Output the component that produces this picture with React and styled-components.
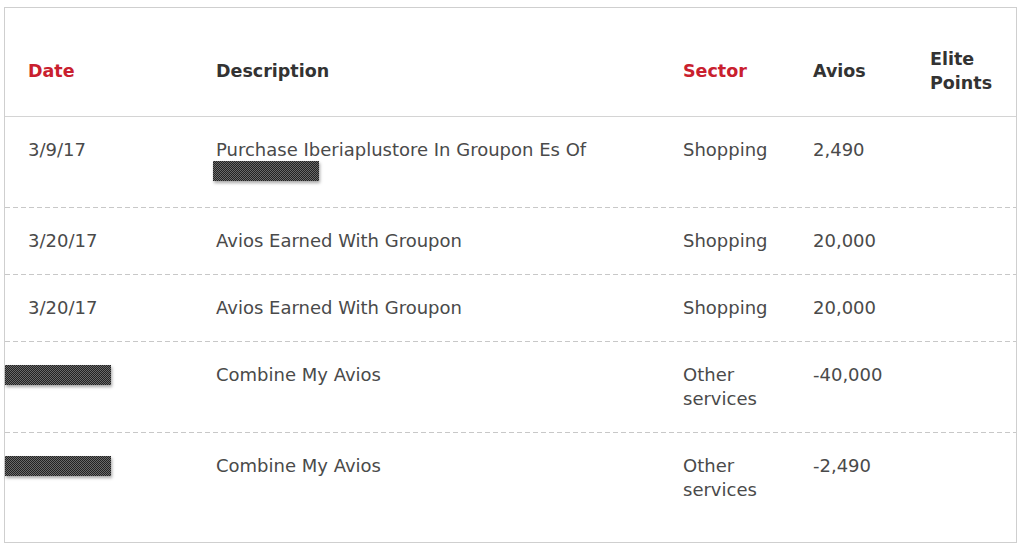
import React from 'react';
import styled, { createGlobalStyle } from 'styled-components';

const rows = [
  { date: '3/9/17', desc: 'Purchase Iberiaplustore In Groupon Es Of', descRedact: true, sector: 'Shopping', avios: '2,490' },
  { date: '3/20/17', desc: 'Avios Earned With Groupon', sector: 'Shopping', avios: '20,000' },
  { date: '3/20/17', desc: 'Avios Earned With Groupon', sector: 'Shopping', avios: '20,000' },
  { dateRedact: true, desc: 'Combine My Avios', sector: 'Other services', avios: '-40,000' },
  { dateRedact: true, desc: 'Combine My Avios', sector: 'Other services', avios: '-2,490' },
];

function App() {
  return (
    <>
      <GlobalStyle />
      <Panel>
        <HeaderRow>
          <HeadCell $red>Date</HeadCell>
          <HeadCell>Description</HeadCell>
          <HeadCell $red>Sector</HeadCell>
          <HeadCell>Avios</HeadCell>
          <HeadCell>Elite<br />Points</HeadCell>
        </HeaderRow>
        {rows.map((row, i) => (
          <Row key={i} $last={i === rows.length - 1}>
            <Cell>
              {row.dateRedact ? <Redacted $edge /> : row.date}
            </Cell>
            <Cell>
              {row.desc}
              {row.descRedact && <Redacted />}
            </Cell>
            <SectorCell>{row.sector}</SectorCell>
            <Cell>{row.avios}</Cell>
            <Cell />
          </Row>
        ))}
      </Panel>
    </>
  );
}

const GlobalStyle = createGlobalStyle`
  body {
    margin: 0;
    background: #fff;
    font-family: "DejaVu Sans", Verdana, sans-serif;
  }
`;

const Panel = styled.div`
  margin: 7px 0 0 4px;
  width: 1011px;
  height: 534px;
  border: 1px solid #cfcfcf;
`;

const columns = '188px 467px 130px 117px 1fr';

const HeaderRow = styled.div`
  display: grid;
  grid-template-columns: ${columns};
  align-items: center;
  height: 109px;
  box-sizing: border-box;
  padding: 17px 0 0 23px;
  border-bottom: 1px solid #d4d4d4;
`;

const HeadCell = styled.div`
  font-size: 17.5px;
  font-weight: bold;
  line-height: 24px;
  color: ${({ $red }) => ($red ? '#c9202e' : '#333')};
`;

const Row = styled.div`
  display: grid;
  grid-template-columns: ${columns};
  align-items: start;
  padding: 21px 0 22px 23px;
  background-image: ${({ $last }) => ($last
    ? 'none'
    : 'repeating-linear-gradient(90deg, #c8c8c8 0 5px, transparent 5px 8px)')};
  background-size: 100% 1px;
  background-position: bottom;
  background-repeat: no-repeat;
`;

const Cell = styled.div`
  font-size: 18px;
  line-height: 24px;
  color: #4a4a4a;
  white-space: nowrap;
`;

const SectorCell = styled(Cell)`
  white-space: normal;
  max-width: 90px;
`;

const Redacted = styled.span`
  display: block;
  width: 106px;
  height: 20px;
  margin: ${({ $edge }) => ($edge ? '2px 0 0 -23px' : '-1px 0 5px -3px')};
  background-color: #3a3a3a;
  background-image: repeating-conic-gradient(#222 0 25%, #6a6a6a 0 50%);
  background-size: 2px 2px;
  box-shadow: 1px 2px 3px rgba(0, 0, 0, 0.35);
`;

export default App;
